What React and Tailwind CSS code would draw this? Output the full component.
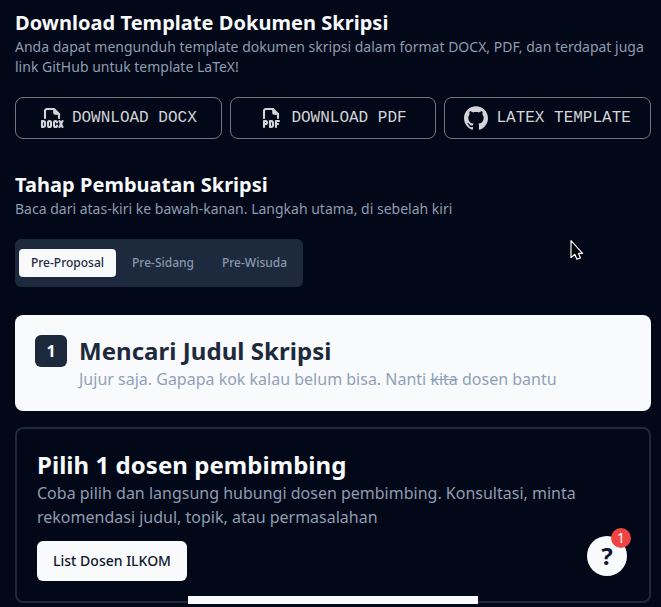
import { TbFileTypeDocx, TbFileTypePdf } from "react-icons/tb";
import { SiGithub } from "react-icons/si";

function DownloadButton({ icon, children }) {
  return (
    <button className="flex h-[42px] items-center justify-center gap-2 rounded-lg border border-[#73757a] font-['Liberation_Mono',monospace] text-base text-[#d4d5d8]">
      {icon}
      <span>{children}</span>
    </button>
  );
}

function SectionHeading({ title, children }) {
  return (
    <header>
      <h2 className="text-xl leading-7 font-bold tracking-[0.035px] text-slate-50">{title}</h2>
      <p className="text-sm leading-5 text-[#8e9cb1]">{children}</p>
    </header>
  );
}

export default function App() {
  return (
    <div className="relative h-[607px] overflow-hidden bg-[#020817] pr-[10px] pl-[15px] pt-[9px] font-['Noto_Sans',sans-serif]">
      <SectionHeading title="Download Template Dokumen Skripsi">
        Anda dapat mengunduh template dokumen skripsi dalam format DOCX, PDF, dan terdapat juga link GitHub untuk template LaTeX!
      </SectionHeading>
      <div className="mt-5 grid grid-cols-3 gap-2">
        <DownloadButton icon={<TbFileTypeDocx size={24} className="stroke-[2.1] [&>path:first-of-type]:fill-current [&>path:first-of-type]:stroke-[1.6]" />}>DOWNLOAD DOCX</DownloadButton>
        <DownloadButton icon={<TbFileTypePdf size={24} className="stroke-[2.1] [&>path:first-of-type]:fill-current [&>path:first-of-type]:stroke-[1.6]" />}>DOWNLOAD PDF</DownloadButton>
        <DownloadButton icon={<SiGithub size={24} />}>LATEX TEMPLATE</DownloadButton>
      </div>

      <div className="mt-8">
        <SectionHeading title="Tahap Pembuatan Skripsi">
          Baca dari atas-kiri ke bawah-kanan. Langkah utama, di sebelah kiri
        </SectionHeading>
      </div>
      <div className="mt-5 flex h-12 w-[288px] items-center rounded-md bg-slate-800 p-1 text-xs font-medium whitespace-nowrap text-[#8a97ab]">
        <button className="h-7 w-[97px] shrink-0 rounded-sm bg-slate-50 text-slate-800">Pre-Proposal</button>
        <button className="h-7 w-[94px] shrink-0">Pre-Sidang</button>
        <button className="h-7 w-[89px] shrink-0">Pre-Wisuda</button>
      </div>

      <section className="mt-7 flex h-24 gap-3 rounded-lg bg-slate-50 p-5">
        <div className="flex size-8 items-center justify-center rounded-md bg-slate-800 font-bold text-slate-50">1</div>
        <div>
          <h3 className="text-2xl leading-8 font-bold tracking-[0.045px] text-slate-800">Mencari Judul Skripsi</h3>
          <p className="leading-6 text-slate-400">
            Jujur saja. Gapapa kok kalau belum bisa. Nanti <s>kita</s> dosen bantu
          </p>
        </div>
      </section>

      <section className="mt-4 h-44 rounded-lg border-2 border-slate-800 px-5 pt-5">
        <h3 className="text-2xl leading-8 font-bold tracking-[0.045px] text-slate-50">Pilih 1 dosen pembimbing</h3>
        <p className="leading-6 text-[#8e9cb1]">
          Coba pilih dan langsung hubungi dosen pembimbing. Konsultasi, minta rekomendasi judul, topik, atau permasalahan
        </p>
        <button className="mt-3 h-10 w-[150px] rounded-md bg-slate-50 text-sm font-medium text-slate-900">List Dosen ILKOM</button>
      </section>

      <button className="absolute top-[536px] left-[587px] flex size-10 items-center justify-center rounded-full bg-slate-50 text-2xl font-bold text-slate-900">
        ?
        <span className="absolute -top-2 -right-1 flex size-5 items-center justify-center rounded-full bg-[#ef4444] text-sm leading-5 font-normal text-slate-50">1</span>
      </button>
      <div className="absolute top-[596px] left-[188px] h-2 w-[290px] bg-slate-50" />
      <svg className="absolute top-[239px] left-[569px]" width="17" height="23" viewBox="0 0 17 23">
        <path d="M2 1.6v17l3.8-3.3 2.1 4.9 3.5-1.3-1.9-4.6h4.1Z" fill="#000" stroke="#fff" strokeWidth="1.2" strokeLinejoin="round" />
      </svg>
    </div>
  );
}
